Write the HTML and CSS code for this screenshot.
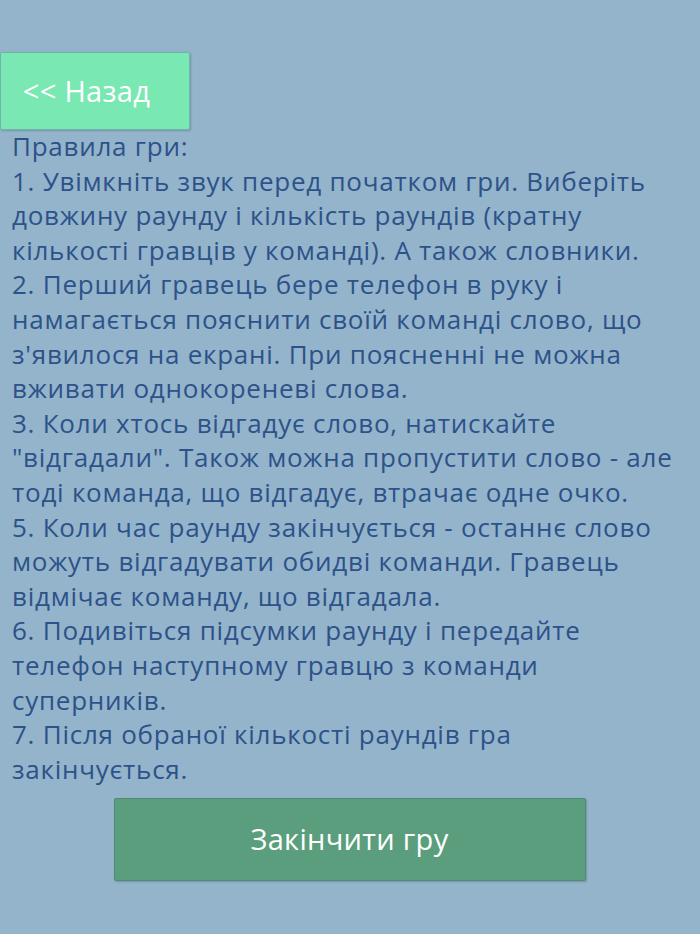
FILE: index.html
```html
<!DOCTYPE html>
<html lang="uk">
<head>
<meta charset="utf-8">
<title>Правила гри</title>
<link rel="stylesheet" href="styles.css">
</head>
<body>
<div class="page">
  <div class="top">
    <button class="back">&lt;&lt; Назад</button>
  </div>
  <div class="rules">
    <div class="line">Правила гри:</div>
    <div class="line">1. Увімкніть звук перед початком гри. Виберіть</div>
    <div class="line">довжину раунду і кількість раундів (кратну</div>
    <div class="line">кількості гравців у команді). А також словники.</div>
    <div class="line">2. Перший гравець бере телефон в руку і</div>
    <div class="line">намагається пояснити своїй команді слово, що</div>
    <div class="line">з'явилося на екрані. При поясненні не можна</div>
    <div class="line">вживати однокореневі слова.</div>
    <div class="line">3. Коли хтось відгадує слово, натискайте</div>
    <div class="line">"відгадали". Також можна пропустити слово - але</div>
    <div class="line">тоді команда, що відгадує, втрачає одне очко.</div>
    <div class="line">5. Коли час раунду закінчується - останнє слово</div>
    <div class="line">можуть відгадувати обидві команди. Гравець</div>
    <div class="line">відмічає команду, що відгадала.</div>
    <div class="line">6. Подивіться підсумки раунду і передайте</div>
    <div class="line">телефон наступному гравцю з команди</div>
    <div class="line">суперників.</div>
    <div class="line">7. Після обраної кількості раундів гра</div>
    <div class="line">закінчується.</div>
  </div>
  <div class="bottom">
    <button class="finish">Закінчити гру</button>
  </div>
</div>
</body>
</html>
```
FILE: styles.css
```css
html, body {
  margin: 0;
  padding: 0;
  background: #94b4cb;
}
body {
  width: 700px;
  height: 934px;
  overflow: hidden;
  font-family: "Open Sans", "Noto Sans", sans-serif;
}
.page {
  display: flex;
  flex-direction: column;
  padding-top: 52px;
}
.top {
  display: flex;
}
.back {
  width: 190px;
  height: 78px;
  margin: 0;
  padding: 0 17px 2px 0;
  background: #79e8b3;
  border: 1px solid #6fb5a6;
  border-radius: 2px;
  box-shadow: 1px 1px 2px rgba(60, 90, 110, 0.35);
  color: #ffffff;
  font-family: inherit;
  font-size: 29px;
  letter-spacing: 0.3px;
  text-align: center;
}
.rules {
  margin-top: -1px;
  padding: 0 0 0 12px;
  color: #2d5289;
  font-size: 26px;
  letter-spacing: 0.75px;
  white-space: nowrap;
}
.line {
  height: 34.6px;
  line-height: 34px;
}
.bottom {
  display: flex;
  justify-content: center;
  padding-top: 12px;
  padding-right: 1px;
}
.finish {
  width: 472px;
  height: 83px;
  margin: 0;
  padding: 0 0 2px;
  background: #5a9e7d;
  border: 1px solid #4f8a72;
  border-radius: 2px;
  box-shadow: 1px 1px 2px rgba(60, 90, 110, 0.35);
  color: #ffffff;
  font-family: inherit;
  font-size: 29px;
  letter-spacing: 0.3px;
  text-align: center;
}
```
